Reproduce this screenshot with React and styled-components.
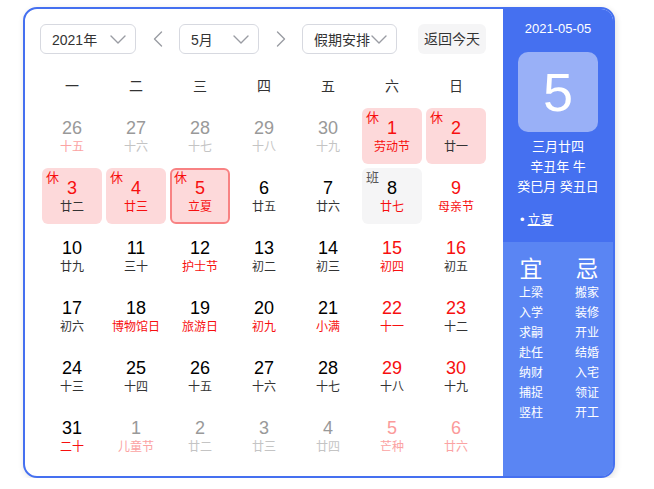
import styled, { createGlobalStyle } from "styled-components";

const BLUE = "#4570f0";
const RED = "#f70f0f";

const GlobalStyle = createGlobalStyle`
  body {
    margin: 0;
    background: #fff;
    font-family: "Liberation Sans", Arial, "Noto Sans CJK SC", sans-serif;
  }
`;

const weekdays = ["一", "二", "三", "四", "五", "六", "日"];

// tone: n = normal, r = red, g = gray (other month), p = pale red (other month)
const days = [
  { d: 26, l: "十五", dc: "g", lc: "p" },
  { d: 27, l: "十六", dc: "g", lc: "g" },
  { d: 28, l: "十七", dc: "g", lc: "g" },
  { d: 29, l: "十八", dc: "g", lc: "g" },
  { d: 30, l: "十九", dc: "g", lc: "g" },
  { d: 1, l: "劳动节", dc: "r", lc: "r", tag: "休" },
  { d: 2, l: "廿一", dc: "r", lc: "n", tag: "休" },
  { d: 3, l: "廿二", dc: "r", lc: "n", tag: "休" },
  { d: 4, l: "廿三", dc: "r", lc: "r", tag: "休" },
  { d: 5, l: "立夏", dc: "r", lc: "r", tag: "休", today: true },
  { d: 6, l: "廿五", dc: "n", lc: "n" },
  { d: 7, l: "廿六", dc: "n", lc: "n" },
  { d: 8, l: "廿七", dc: "n", lc: "r", tag: "班" },
  { d: 9, l: "母亲节", dc: "r", lc: "r" },
  { d: 10, l: "廿九", dc: "n", lc: "n" },
  { d: 11, l: "三十", dc: "n", lc: "n" },
  { d: 12, l: "护士节", dc: "n", lc: "r" },
  { d: 13, l: "初二", dc: "n", lc: "n" },
  { d: 14, l: "初三", dc: "n", lc: "n" },
  { d: 15, l: "初四", dc: "r", lc: "r" },
  { d: 16, l: "初五", dc: "r", lc: "n" },
  { d: 17, l: "初六", dc: "n", lc: "n" },
  { d: 18, l: "博物馆日", dc: "n", lc: "r" },
  { d: 19, l: "旅游日", dc: "n", lc: "r" },
  { d: 20, l: "初九", dc: "n", lc: "r" },
  { d: 21, l: "小满", dc: "n", lc: "r" },
  { d: 22, l: "十一", dc: "r", lc: "r" },
  { d: 23, l: "十二", dc: "r", lc: "n" },
  { d: 24, l: "十三", dc: "n", lc: "n" },
  { d: 25, l: "十四", dc: "n", lc: "n" },
  { d: 26, l: "十五", dc: "n", lc: "n" },
  { d: 27, l: "十六", dc: "n", lc: "n" },
  { d: 28, l: "十七", dc: "n", lc: "n" },
  { d: 29, l: "十八", dc: "r", lc: "n" },
  { d: 30, l: "十九", dc: "r", lc: "n" },
  { d: 31, l: "二十", dc: "n", lc: "r" },
  { d: 1, l: "儿童节", dc: "g", lc: "p" },
  { d: 2, l: "廿二", dc: "g", lc: "g" },
  { d: 3, l: "廿三", dc: "g", lc: "g" },
  { d: 4, l: "廿四", dc: "g", lc: "g" },
  { d: 5, l: "芒种", dc: "p", lc: "p" },
  { d: 6, l: "廿六", dc: "p", lc: "p" },
];

const numColor = { n: "#000", r: RED, g: "#999", p: "#fb9a9a" };
const lunarColor = { n: "#333", r: RED, g: "#c4c4c4", p: "#fba3a3" };

const good = ["上梁", "入学", "求嗣", "赴任", "纳财", "捕捉", "竖柱"];
const bad = ["搬家", "装修", "开业", "结婚", "入宅", "领证", "开工"];

function Chevron({ dir }) {
  const d = {
    down: "M1 5 L8 12 L15 5",
    left: "M11.5 1 L4.5 8 L11.5 15",
    right: "M4.5 1 L11.5 8 L4.5 15",
  }[dir];
  return (
    <svg width="16" height="16" viewBox="0 0 16 16">
      <path d={d} fill="none" stroke="#9a9ca3" strokeWidth="1.4" strokeLinecap="round" strokeLinejoin="round" />
    </svg>
  );
}

function App() {
  return (
    <Page>
      <GlobalStyle />
      <Card>
        <Main>
          <Toolbar>
            <Select $width={96}>
              2021年
              <Chevron dir="down" />
            </Select>
            <ArrowButton>
              <Chevron dir="left" />
            </ArrowButton>
            <Select $width={80}>
              5月
              <Chevron dir="down" />
            </Select>
            <ArrowButton>
              <Chevron dir="right" />
            </ArrowButton>
            <Select $width={95}>
              假期安排
              <Chevron dir="down" />
            </Select>
            <TodayButton>返回今天</TodayButton>
          </Toolbar>
          <WeekRow>
            {weekdays.map((w) => (
              <WeekCell key={w}>{w}</WeekCell>
            ))}
          </WeekRow>
          <Grid>
            {days.map((day, i) => (
              <DayCell key={i} $tag={day.tag} $today={day.today}>
                {day.tag && <Tag $work={day.tag === "班"}>{day.tag}</Tag>}
                <DayNum $color={numColor[day.dc]}>{day.d}</DayNum>
                <Lunar $color={lunarColor[day.lc]}>{day.l}</Lunar>
              </DayCell>
            ))}
          </Grid>
        </Main>
        <Side>
          <SideTop>
            <SideDate>2021-05-05</SideDate>
            <BigDay>5</BigDay>
            <SideLines>
              <div>三月廿四</div>
              <div>辛丑年 牛</div>
              <div>癸巳月 癸丑日</div>
            </SideLines>
            <Term>
              <Dot>•</Dot>
              <TermLink>立夏</TermLink>
            </Term>
          </SideTop>
          <SideBottom>
            <AdviceColumn>
              <AdviceTitle>宜</AdviceTitle>
              {good.map((g) => (
                <AdviceItem key={g}>{g}</AdviceItem>
              ))}
            </AdviceColumn>
            <AdviceColumn>
              <AdviceTitle>忌</AdviceTitle>
              {bad.map((b) => (
                <AdviceItem key={b}>{b}</AdviceItem>
              ))}
            </AdviceColumn>
          </SideBottom>
        </Side>
      </Card>
    </Page>
  );
}

const Page = styled.div`
  padding: 7px 0 0 23px;
`;

const Card = styled.div`
  display: flex;
  width: 592px;
  height: 471px;
  box-sizing: border-box;
  border: 2px solid ${BLUE};
  border-radius: 14px;
  overflow: hidden;
  background: #fff;
  box-shadow: 1px 2px 6px rgba(0, 0, 0, 0.12);
`;

const Main = styled.div`
  width: 478px;
  padding: 15px 0 0 15px;
  box-sizing: border-box;
`;

const Toolbar = styled.div`
  display: flex;
  align-items: center;
  height: 30px;
`;

const Select = styled.div`
  display: flex;
  align-items: center;
  justify-content: space-between;
  width: ${(p) => p.$width}px;
  height: 30px;
  box-sizing: border-box;
  padding: 0 9px 0 11px;
  border: 1px solid #d7d9e0;
  border-radius: 6px;
  font-size: 14px;
  color: #333;
`;

const ArrowButton = styled.div`
  display: flex;
  align-items: center;
  justify-content: center;
  width: 43px;
  height: 30px;
`;

const TodayButton = styled.div`
  margin-left: 21px;
  width: 68px;
  height: 30px;
  line-height: 30px;
  text-align: center;
  background: #f5f5f6;
  border-radius: 6px;
  font-size: 14px;
  color: #333;
`;

const WeekRow = styled.div`
  display: grid;
  grid-template-columns: repeat(7, 60px);
  column-gap: 4px;
  margin: 12px 0 2px 2px;
`;

const WeekCell = styled.div`
  height: 40px;
  line-height: 40px;
  text-align: center;
  font-size: 14px;
  color: #333;
`;

const Grid = styled.div`
  display: grid;
  grid-template-columns: repeat(7, 60px);
  grid-auto-rows: 56px;
  gap: 4px;
  margin-left: 2px;
`;

const DayCell = styled.div`
  position: relative;
  box-sizing: border-box;
  padding-top: 8px;
  text-align: center;
  border-radius: 6px;
  background: ${(p) => (p.$tag === "休" ? "#fdd9da" : p.$tag === "班" ? "#f5f5f6" : "transparent")};
  border: 2px solid ${(p) => (p.$today ? "#f88283" : "transparent")};
`;

const Tag = styled.span`
  position: absolute;
  top: 0;
  left: 2px;
  font-size: 13px;
  line-height: 16px;
  color: ${(p) => (p.$work ? "#555" : RED)};
`;

const DayNum = styled.div`
  font-size: 18px;
  line-height: 20px;
  color: ${(p) => p.$color};
`;

const Lunar = styled.div`
  margin-top: 1px;
  font-size: 12px;
  line-height: 16px;
  white-space: nowrap;
  color: ${(p) => p.$color};
`;

const Side = styled.div`
  flex: 1;
  display: flex;
  flex-direction: column;
  background: ${BLUE};
  color: #fff;
`;

const SideTop = styled.div`
  height: 233px;
  display: flex;
  flex-direction: column;
  align-items: center;
  padding-top: 11px;
  box-sizing: border-box;
`;

const SideDate = styled.div`
  font-size: 13px;
  line-height: 18px;
`;

const BigDay = styled.div`
  margin-top: 14px;
  width: 80px;
  height: 80px;
  border-radius: 10px;
  background: rgba(255, 255, 255, 0.45);
  font-size: 54px;
  line-height: 80px;
  text-align: center;
  font-weight: 300;
`;

const SideLines = styled.div`
  margin-top: 5px;
  font-size: 13px;
  line-height: 20px;
  text-align: center;
`;

const Term = styled.div`
  align-self: flex-start;
  margin: 13px 0 0 17px;
  font-size: 13px;
  line-height: 20px;
`;

const Dot = styled.span`
  margin-right: 3px;
`;

const TermLink = styled.span`
  text-decoration: underline;
`;

const SideBottom = styled.div`
  flex: 1;
  display: flex;
  gap: 32px;
  padding: 13px 0 0 16px;
  background: #5a85f3;
`;

const AdviceColumn = styled.div`
  display: flex;
  flex-direction: column;
  align-items: center;
  width: 24px;
`;

const AdviceTitle = styled.div`
  font-size: 23px;
  line-height: 28px;
`;

const AdviceItem = styled.div`
  font-size: 12px;
  line-height: 20px;
  white-space: nowrap;
`;

export default App;
